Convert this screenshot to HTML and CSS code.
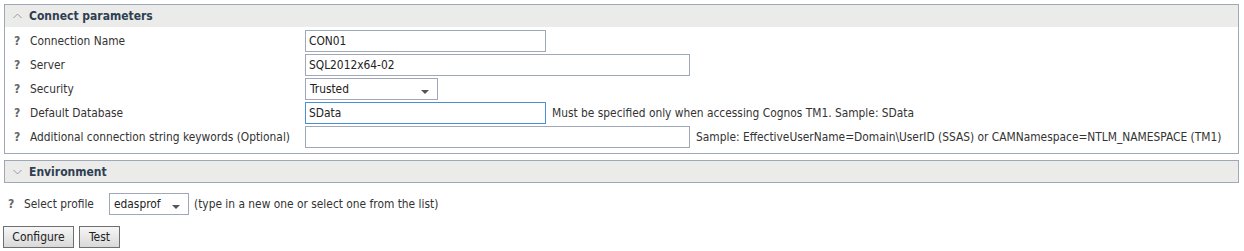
FILE: index.html
```html
<!DOCTYPE html>
<html>
<head>
<meta charset="utf-8">
<link rel="stylesheet" href="styles.css">
</head>
<body>
<div class="panel">
  <div class="panel-head">
    <svg class="chev" width="9" height="6" viewBox="0 0 9 6"><polyline points="0.5,5 4.5,1 8.5,5" fill="none" stroke="#9a9a9a" stroke-width="1"/></svg>
    <span>Connect parameters</span>
  </div>
  <div class="rows">
    <div class="row">
      <div class="label"><span class="q">?</span>Connection Name</div>
      <div class="field"><div class="input w240">CON01</div></div>
    </div>
    <div class="row">
      <div class="label"><span class="q">?</span>Server</div>
      <div class="field"><div class="input w384">SQL2012x64-02</div></div>
    </div>
    <div class="row">
      <div class="label"><span class="q">?</span>Security</div>
      <div class="field"><div class="select w132">Trusted<span class="arrow"></span></div></div>
    </div>
    <div class="row">
      <div class="label"><span class="q">?</span>Default Database</div>
      <div class="field"><div class="input w240 focus">SData</div><span class="hint">Must be specified only when accessing Cognos TM1. Sample: SData</span></div>
    </div>
    <div class="row">
      <div class="label"><span class="q">?</span>Additional connection string keywords (Optional)</div>
      <div class="field"><div class="input w384"></div><span class="hint">Sample: EffectiveUserName=Domain\UserID (SSAS) or CAMNamespace=NTLM_NAMESPACE (TM1)</span></div>
    </div>
  </div>
</div>
<div class="panel collapsed">
  <div class="panel-head">
    <svg class="chev" width="9" height="6" viewBox="0 0 9 6"><polyline points="0.5,1 4.5,5 8.5,1" fill="none" stroke="#9a9a9a" stroke-width="1"/></svg>
    <span>Environment</span>
  </div>
</div>
<div class="profile-row">
  <span class="q">?</span><span class="plabel">Select profile</span>
  <div class="select w80">edasprof<span class="arrow"></span></div>
  <span class="hint">(type in a new one or select one from the list)</span>
</div>
<div class="buttons">
  <button class="btn w71">Configure</button>
  <button class="btn w41">Test</button>
</div>
</body>
</html>
```
FILE: styles.css
```css
html, body {
  margin: 0;
  padding: 0;
  background: #ffffff;
  font-family: "DejaVu Sans Condensed", "DejaVu Sans", sans-serif;
  font-stretch: condensed;
  font-size: 11.85px;
  color: #333333;
}
.panel {
  margin: 4px 0 0 4px;
  width: 1235px;
  box-sizing: border-box;
  border: 1px solid #9ea8b8;
}
.panel.collapsed {
  margin-top: 6px;
}
.panel-head {
  height: 22px;
  background: #ebece9;
  display: flex;
  align-items: center;
  padding-left: 8px;
  font-weight: bold;
  font-size: 12px;
  color: #2f3e52;
}
.collapsed .panel-head {
  height: 21px;
}
.chev {
  margin-right: 7px;
  display: block;
  flex-shrink: 0;
}
.rows {
  padding: 2px 0 4px 0;
}
.row {
  display: flex;
  align-items: center;
  height: 24px;
}
.label {
  width: 300px;
  flex-shrink: 0;
  padding-left: 9px;
  box-sizing: border-box;
  display: flex;
  align-items: center;
  white-space: nowrap;
}
.q {
  font-weight: bold;
  font-size: 12px;
  color: #666666;
  width: 16px;
  flex-shrink: 0;
  display: inline-block;
}
.field {
  display: flex;
  align-items: center;
}
.input, .select {
  height: 22px;
  flex-shrink: 0;
  box-sizing: border-box;
  border: 1px solid #9ea8b8;
  background: #fff;
  padding-left: 3px;
  line-height: 20px;
  color: #222;
  position: relative;
}
.input.focus {
  border-color: #4a8fd6;
}
.w240 { width: 241px; }
.w384 { width: 385px; }
.w132 { width: 133px; }
.w80 { width: 80px; }
.select {
  padding-left: 4px;
}
.arrow {
  position: absolute;
  right: 8px;
  top: 11px;
  width: 0;
  height: 0;
  border-left: 4px solid transparent;
  border-right: 4px solid transparent;
  border-top: 4px solid #555;
}
.hint {
  margin-left: 6px;
  white-space: nowrap;
}
.profile-row {
  display: flex;
  align-items: center;
  margin-top: 10px;
  padding-left: 8px;
  height: 22px;
}
.plabel {
  width: 85px;
  flex-shrink: 0;
}
.profile-row .hint {
  margin-left: 5px;
}
.buttons {
  display: flex;
  gap: 5px;
  margin-top: 11px;
  padding-left: 3px;
}
.btn {
  height: 22px;
  box-sizing: border-box;
  border: 1px solid #6f6f6f;
  background: linear-gradient(#f6f6f6, #d9d9d9);
  font-family: "DejaVu Sans Condensed", "DejaVu Sans", sans-serif;
  font-stretch: condensed;
  font-size: 12px;
  color: #222;
  padding: 0;
}
.w71 { width: 71px; }
.w41 { width: 41px; }
```
